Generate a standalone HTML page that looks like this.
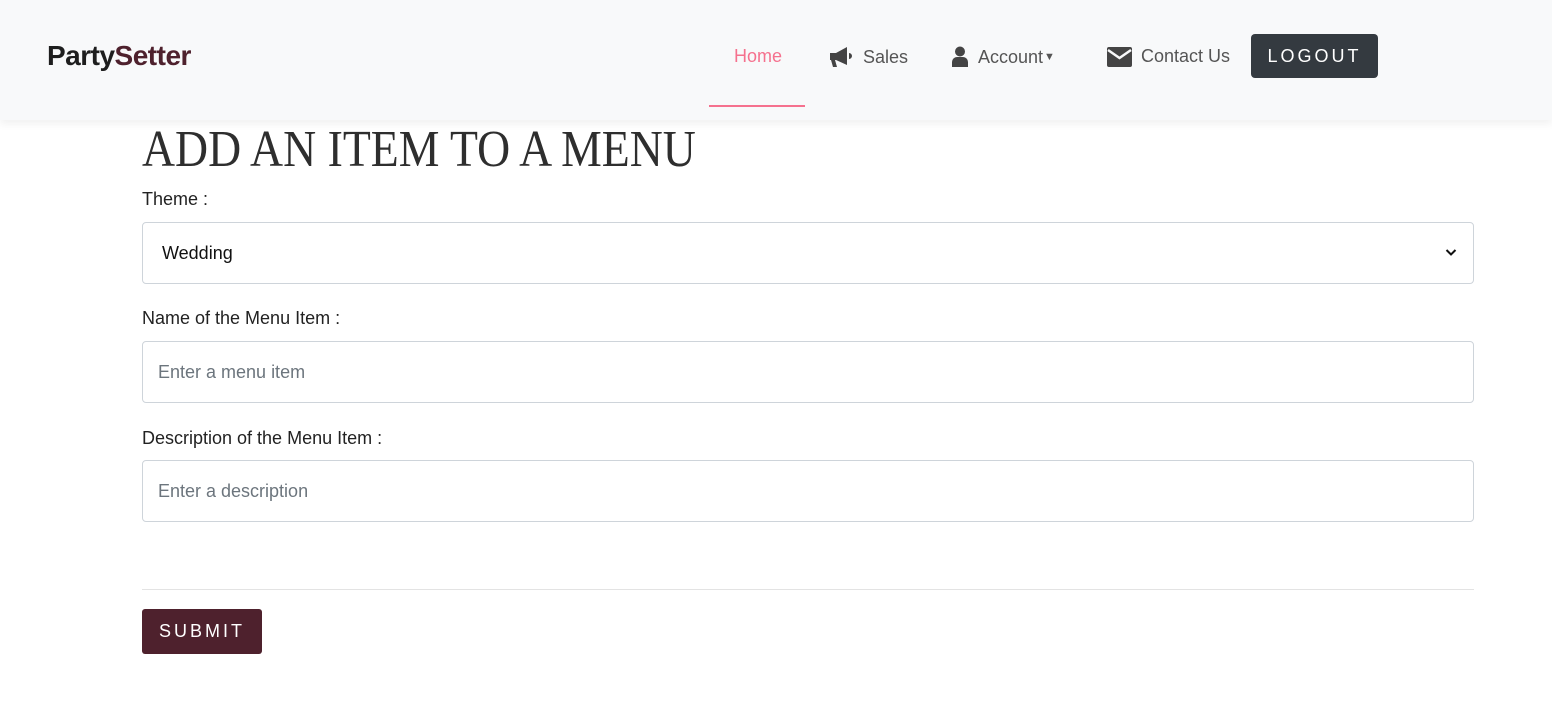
<!DOCTYPE html>
<html><head><style>
body{margin:0;background:#fff;font-family:"Liberation Sans",sans-serif;width:1552px;height:716px;overflow:hidden;position:relative}
.nav{position:absolute;left:0;top:0;width:1552px;height:120px;background:#f8f9fa;box-shadow:0 4px 8px rgba(0,0,0,.06)}
.brand{position:absolute;left:47px;top:40px;font-size:28px;font-weight:bold;color:#1e1e1e;letter-spacing:-0.5px}
.brand span{color:#4e212d}
.ni{position:absolute;top:46px;font-size:18px;color:#555;display:flex;align-items:center;gap:9px}
.home{color:#f5718e}
.ul{position:absolute;left:709px;top:105px;width:96px;height:2px;background:#f5718e}
.logout{position:absolute;left:1251px;top:34px;width:127px;height:44px;background:#343a40;border-radius:4px;color:#fff;font-size:18px;letter-spacing:3px;text-align:center;line-height:44px}
h1{position:absolute;left:142px;top:120px;margin:0;font-family:"Liberation Serif",serif;font-weight:normal;font-size:52px;color:#2e2e2e;transform-origin:left;transform:scaleX(.88);white-space:nowrap}
.lbl{position:absolute;left:142px;font-size:18px;color:#222}
.inp{position:absolute;left:142px;width:1330px;height:60px;border:1px solid #ced4da;border-radius:4px;font-size:18px;color:#6c757d;line-height:60px;text-indent:15px}
hr{position:absolute;left:142px;top:589px;width:1332px;margin:0;border:0;border-top:1px solid #e3e3e3}
.sub{position:absolute;left:142px;top:609px;width:120px;height:45px;background:#4e212d;border-radius:3px;color:#fff;font-size:18px;letter-spacing:3px;text-align:center;line-height:45px}
</style></head><body>
<div class="nav">
<div class="brand">Party<span>Setter</span></div>
<div class="ni home" style="left:734px">Home</div>
<div class="ni" style="left:829px"><svg width="25" height="22" viewBox="0 0 25 22"><path d="M1 7h6l11-6v18l-11-5H6l2 7H4L2 14H1z M20 7a3 3 0 0 1 0 6z" fill="#444"/></svg>Sales</div>
<div class="ni" style="left:951px"><svg width="18" height="22" viewBox="0 0 18 22"><circle cx="9" cy="5.5" r="5" fill="#444"/><path d="M1 21v-5a5 5 0 0 1 5-5h6a5 5 0 0 1 5 5v5z" fill="#444"/></svg>Account<span style="margin-left:-8px;font-size:11px">▼</span></div>
<div class="ni" style="left:1107px"><svg width="25" height="20" viewBox="0 0 25 20"><rect x="0" y="0" width="25" height="20" rx="2" fill="#444"/><path d="M1 3l11.5 8L24 3" stroke="#f8f9fa" stroke-width="2.5" fill="none"/></svg>Contact Us</div>
<div class="ul"></div>
<div class="logout">LOGOUT</div>
</div>
<h1>ADD AN ITEM TO A MENU</h1>
<div class="lbl" style="top:189px">Theme :</div>
<div class="inp" style="top:222px;color:#111;text-indent:19px">Wedding<svg style="position:absolute;right:16px;top:25px" width="12" height="9" viewBox="0 0 12 9"><path d="M1.5 2l4.5 4.5L10.5 2" stroke="#111" stroke-width="2" fill="none"/></svg></div>
<div class="lbl" style="top:308px">Name of the Menu Item :</div>
<div class="inp" style="top:341px">Enter a menu item</div>
<div class="lbl" style="top:428px">Description of the Menu Item :</div>
<div class="inp" style="top:460px">Enter a description</div>
<hr>
<div class="sub">SUBMIT</div>
</body></html>
